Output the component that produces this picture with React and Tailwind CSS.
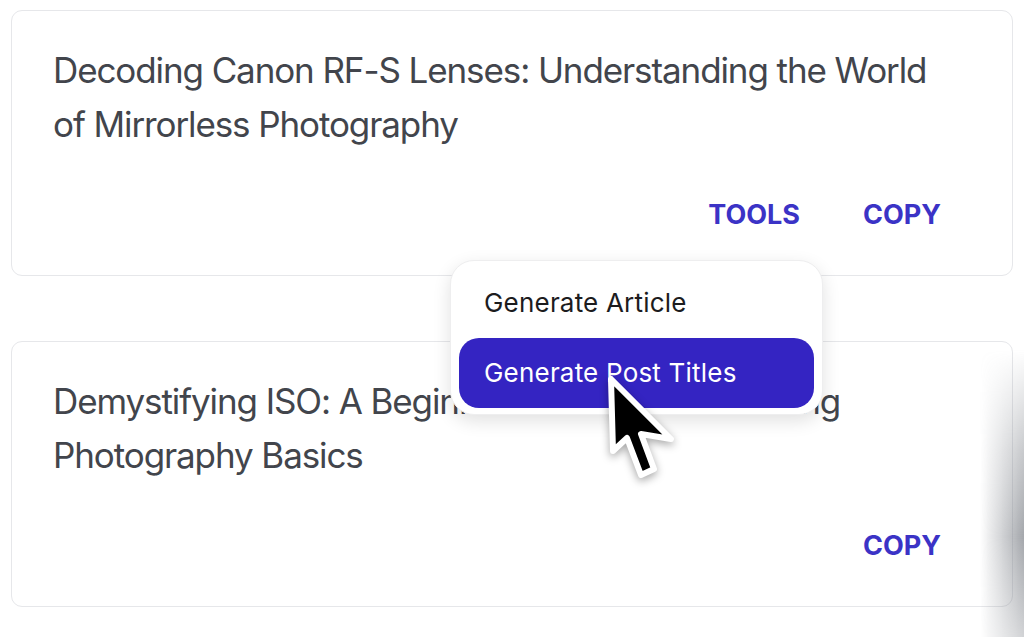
import React from "react";

function Card({ title, tools }) {
  return (
    <div className="flex h-[266px] flex-col rounded-[11px] border border-[#e6e7ea] bg-white pl-[41px] pr-[71px] pt-[32px] pb-[40px]">
      <p className="text-[35px] leading-[54px] tracking-[-1.1px] text-[#42454c]">{title}</p>
      <div className="mt-auto flex h-[40px] items-center justify-end gap-[63px] text-[27px] font-bold leading-[40px] text-[#3b33c6]">
        {tools && <button>TOOLS</button>}
        <button>COPY</button>
      </div>
    </div>
  );
}

function Cursor() {
  return (
    <svg
      className="absolute left-[601px] top-[369px] drop-shadow-[0_3px_4px_rgba(0,0,0,0.35)]"
      width="90"
      height="120"
      viewBox="0 0 90 120"
    >
      <polygon
        points="10,10 12,82 26,69 40,106 53,100 40,65 70,70"
        fill="#000"
        stroke="#fff"
        strokeWidth="6"
        strokeLinejoin="round"
      />
    </svg>
  );
}

export default function App() {
  return (
    <div
      className="relative h-[637px] w-[1024px] overflow-hidden bg-white px-[11px] pt-[10px]"
      style={{ fontFamily: "Inter, 'Noto Sans', sans-serif" }}
    >
      <div className="flex flex-col gap-[65px]">
        <Card
          title="Decoding Canon RF-S Lenses: Understanding the World of Mirrorless Photography"
          tools
        />
        <Card title="Demystifying ISO: A Beginner's Guide to Mastering Photography Basics" />
      </div>

      <div className="absolute left-[450px] top-[260px] w-[373px] rounded-[24px] border border-[#eeeeef] bg-white px-[8px] pt-[7px] pb-[6px] shadow-[0_6px_18px_rgba(0,0,0,0.12)]">
        <div className="h-[70px] rounded-[20px] px-[25px] text-[26px] leading-[70px] tracking-[0.2px] text-[#1c1c1e]">
          Generate Article
        </div>
        <div className="h-[70px] rounded-[20px] bg-[#3424c2] px-[25px] text-[26px] leading-[70px] tracking-[0.2px] text-white">
          Generate Post Titles
        </div>
      </div>

      <Cursor />

      <div className="pointer-events-none absolute bottom-0 right-0 top-[350px] w-[44px] bg-[linear-gradient(to_right,rgba(255,255,255,0),rgba(125,129,136,0.7))] [mask-image:linear-gradient(to_bottom,transparent,rgba(0,0,0,0.6)_35%,black_65%,rgba(0,0,0,0.5))]" />
    </div>
  );
}
